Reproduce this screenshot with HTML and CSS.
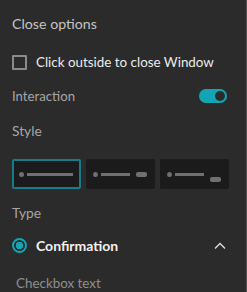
FILE: index.html
```html
<!DOCTYPE html>
<html lang="en">
<head>
  <meta charset="UTF-8" />
  <title>Window settings</title>
  <meta name="viewport" content="width=device-width, initial-scale=1.0"/>
  <link rel="stylesheet" href="styles.css">
</head>
<body>

  <div class="panel">
    <div class="section-title">Close options</div>

    <label class="check-row">
      <span class="checkbox"></span>
      <span>Click outside to close Window</span>
    </label>

    <div class="toggle-row">
      <span class="label">Interaction</span>
      <span class="toggle"><span class="knob"></span></span>
    </div>

    <div class="label style-label">Style</div>

    <div class="styles">
      <div class="style-box active">
        <span class="dot"></span>
        <span class="line long"></span>
      </div>
      <div class="style-box">
        <span class="dot"></span>
        <span class="line"></span>
        <span class="pill"></span>
      </div>
      <div class="style-box low">
        <span class="dot"></span>
        <span class="line"></span>
        <span class="pill"></span>
      </div>
    </div>

    <div class="label type-label">Type</div>

    <div class="radio-row">
      <span class="radio"></span>
      <span class="radio-text">Confirmation</span>
      <svg class="chevron" width="12" height="7" viewBox="0 0 12 7">
        <path d="M1 6.5 L6 1.5 L11 6.5" fill="none" stroke="#e0e0e0" stroke-width="1.3"/>
      </svg>
    </div>

    <div class="label sub-label">Checkbox text</div>
  </div>

</body>
</html>
```

FILE: styles.css
```css
body {
  margin: 0;
  background: #2b2b2b;
  font-family: Lato, "Noto Sans", Arial, sans-serif;
  overflow: hidden;
}

.panel {
  box-sizing: border-box;
  width: 247px;
  height: 292px;
  padding: 12px 12px 0;
  border-right: 1px solid #555;
  overflow: hidden;
}

.section-title {
  color: #c4c4c4;
  font-size: 14.2px;
  line-height: 24px;
}

.label {
  color: #a6a6a6;
  font-size: 13.2px;
  line-height: 20px;
}

.check-row {
  display: flex;
  align-items: center;
  gap: 9px;
  margin-top: 16px;
  height: 20px;
  color: #ececec;
  font-size: 13.4px;
}

.checkbox {
  box-sizing: border-box;
  width: 15px;
  height: 15px;
  border: 2px solid #8a8a8a;
  border-radius: 1px;
}

.toggle-row {
  display: flex;
  align-items: center;
  justify-content: space-between;
  margin-top: 14px;
  height: 20px;
  padding-right: 7px;
}

.toggle {
  display: flex;
  align-items: center;
  justify-content: flex-end;
  box-sizing: border-box;
  width: 28px;
  height: 14px;
  padding: 0 2px;
  border-radius: 7px;
  background: #12a5b4;
}

.knob {
  width: 10px;
  height: 10px;
  border-radius: 50%;
  background: #2b2b2b;
}

.style-label {
  margin-top: 15px;
  font-size: 13.8px;
}

.styles {
  display: flex;
  gap: 5px;
  margin-top: 18px;
}

.style-box {
  box-sizing: border-box;
  display: flex;
  align-items: center;
  gap: 3px;
  width: 69px;
  height: 30px;
  padding: 0 6px 0 5px;
  background: #1b1b1b;
  border: 2px solid #1b1b1b;
  border-radius: 2px;
}

.style-box.active {
  border-color: #137b8a;
}

.dot {
  width: 5px;
  height: 5px;
  border-radius: 50%;
  background: #707070;
}

.line {
  width: 32px;
  height: 3px;
  background: #707070;
}

.line.long {
  flex: 1;
}

.pill {
  width: 12px;
  height: 5px;
  margin-left: 3px;
  border-radius: 2px;
  background: #707070;
}

.style-box.low .pill {
  align-self: flex-end;
  margin-bottom: 5px;
}

.type-label {
  margin-top: 14px;
  font-size: 13.8px;
}

.radio-row {
  display: flex;
  align-items: center;
  gap: 9px;
  margin-top: 12px;
  height: 20px;
  padding-right: 8px;
}

.radio {
  box-sizing: border-box;
  width: 15px;
  height: 15px;
  border: 2px solid #12a5b4;
  border-radius: 50%;
  background: radial-gradient(circle, #12a5b4 0 3.5px, #2b2b2b 4px);
}

.radio-text {
  flex: 1;
  color: #f2f2f2;
  font-size: 14px;
  font-weight: bold;
}

.sub-label {
  margin-top: 18px;
  padding-left: 4px;
  font-size: 13.4px;
  color: #8f8f8f;
}
```
